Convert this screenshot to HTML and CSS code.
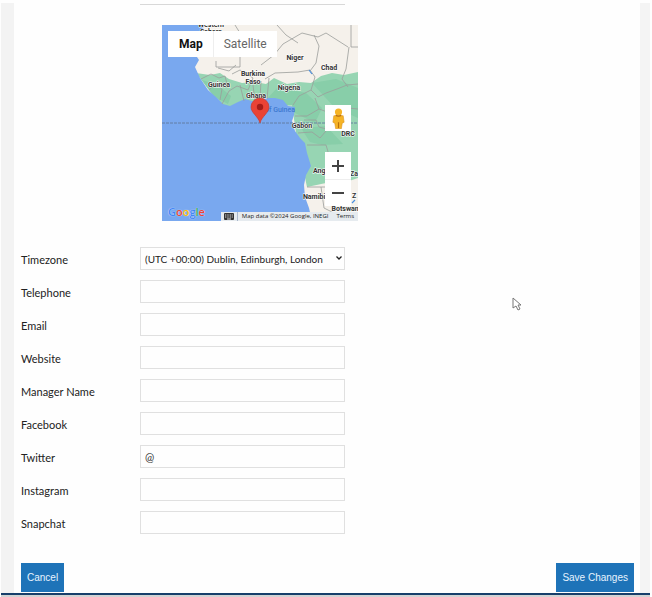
FILE: index.html
```html
<!DOCTYPE html>
<html lang="en">
<head>
<meta charset="utf-8">
<title>Location details</title>
<link rel="stylesheet" href="styles.css">
</head>
<body>
<form class="panel">
  <div class="previous-field"></div>
  <div class="map">
    <svg class="map-art" viewBox="0 0 196 196" aria-label="Map of West Africa">
      <rect width="196" height="196" fill="#f5f1eb"/>
      <path fill="#97d5b3" d="M34 48 48 50 58 48 67 54 80 58 93 57 104 59 112 53 125 59 137 57 149 58 159 51 170 48 182 50 196 47V153L181 158 164 158 145 162 135 115 130 80 60 82Z"/>
      <path fill="#79c79f" opacity=".5" d="M40 55 55 60 69 71 66 79 51 71ZM116 62 144 68 160 83 153 98 133 88 104 75ZM150 58 174 54 196 63V93L173 83ZM139 103 164 101 181 119 160 120 148 117Z"/>
      <path fill="#79a8ef" d="M0 0H42L38 16 33 29 37 35 33 42 38 53 46 65 55 73 61 79 68 81 76 77 83 74 93 77 101 73 113 73 121 75 126 81 133 82 132 90 130 96 133 106 138 113 143 118 145 128 149 141 144 150 142 160 143 172 147 183 150 196H0Z"/>
      <g fill="none" stroke="#9b9d9b" stroke-width=".8">
        <path d="M73 0 78 8M115 0 124 10 136 18M140 8 121 19 112 30 99 40M140 8 156 12 164 8 186 22M152 10 157 21 154 38 148 46M187 22 184 44 180 54 186 62M78 42H54V36M78 42V26M189 0V22M189 22H196"/>
        <path d="M103 54 113 48 136 47 148 45 153 52 149 65 137 71 131 80M70 49 78 45 91 53 86 65 75 61 67 66 60 79M78 60 82 76M91 60 93 77M99 56 98 74M107 53 105 74M39 54 49 49 57 53 63 51 66 63M47 65 53 59 60 64 58 75M56 43 67 46 74 40"/>
        <path d="M149 65 156 72 164 68 175 64 185 60 196 59M153 73 157 84 145 91 133 91M157 84 171 89 186 83 196 84M142 95 154 95 157 102 168 105 174 92M136 108 150 107 158 113 164 106M145 120H164L167 130 181 135M145 162H174L180 170M159 162 162 183 176 190"/>
      </g>
      <path d="M0 98H196" stroke="#60799c" stroke-width=".9" stroke-dasharray="3 1"/>
      <path d="m147 45 3 4M190 178l3-3" stroke="#4a8fe0" stroke-width="1.2"/>
      <g class="map-labels">
        <text x="49" y="2">Western</text><text x="49" y="9">Sahara</text>
        <text x="133" y="35">Niger</text><text x="167" y="45">Chad</text>
        <text x="91" y="51">Burkina</text><text x="91" y="59">Faso</text>
        <text x="57" y="62">Guinea</text><text x="127" y="65">Nigeria</text><text x="94" y="73">Ghana</text>
        <text class="water-label" x="118" y="87">of Guinea</text>
        <text x="140" y="103">Gabon</text><text x="186" y="111">DRC</text>
        <text x="162" y="148">Angola</text><text x="195" y="151">Zam</text>
        <text x="154" y="174">Namibia</text><text x="192" y="173">Z</text><text x="185" y="186">Botswana</text>
      </g>
      <path fill="#ea4335" stroke="#c5372c" stroke-width=".6" d="M98 98C96 91 89 88 89 82a9 9 0 0 1 18 0c0 6-7 9-9 16Z"/>
      <circle cx="98" cy="82" r="3.2" fill="#a71d18"/>
    </svg>
    <div class="map-types"><button type="button" class="map-type selected">Map</button><button type="button" class="map-type">Satellite</button></div>
    <button type="button" class="street-view" aria-label="Street View">
      <svg class="person" viewBox="0 0 16 22"><circle cx="8" cy="4" r="3.8" fill="#f6b426"/><path fill="#f6b426" stroke="#d8901c" stroke-width=".6" d="M3 8h10l1 7-2 1-1 6H5l-1-6-2-1Z"/><path d="M5 7.500q3 2 6 0M8 15v6" fill="none" stroke="#b9700c" stroke-width="1.2"/></svg>
    </button>
    <div class="zoom-controls">
      <button type="button" class="zoom-button" aria-label="Zoom in"><svg class="zoom-icon" viewBox="0 0 12 12"><path d="M0 6h12M6 0v12"/></svg></button>
      <button type="button" class="zoom-button" aria-label="Zoom out"><svg class="zoom-icon" viewBox="0 0 12 12"><path d="M0 6h12"/></svg></button>
    </div>
    <div class="brand" aria-label="Google"><span class="blue">G</span><span class="red">o</span><span class="yellow">o</span><span class="blue">g</span><span class="green">l</span><span class="red">e</span></div>
    <div class="attribution">
      <button type="button" class="keyboard" aria-label="Keyboard shortcuts"><svg class="keyboard-icon" viewBox="0 0 10 7"><rect width="10" height="7" rx="1" fill="#333"/><path d="M1 2h8M1 4h8" stroke="#ddd" stroke-dasharray="1 .7"/><path d="M3 6h4" stroke="#ddd"/></svg></button>
      <span class="map-data">Map data ©2024 Google, INEGI</span>
      <a class="terms" href="#terms">Terms</a>
    </div>
  </div>
  <div class="fields">
    <label class="label" for="timezone">Timezone</label>
    <div class="select-wrap"><select class="control timezone" id="timezone"><option>(UTC +00:00) Dublin, Edinburgh, London</option></select><svg class="chevron" viewBox="0 0 6 4"><path d="m.5.5 2.5 2.5L5.500.5"/></svg></div>
    <label class="label" for="telephone">Telephone</label><input class="control" id="telephone" type="tel">
    <label class="label" for="email">Email</label><input class="control" id="email" type="email">
    <label class="label" for="website">Website</label><input class="control" id="website" type="url">
    <label class="label" for="manager">Manager Name</label><input class="control" id="manager" type="text">
    <label class="label" for="facebook">Facebook</label><input class="control" id="facebook" type="text">
    <label class="label" for="twitter">Twitter</label><input class="control" id="twitter" type="text" value="@">
    <label class="label" for="instagram">Instagram</label><input class="control" id="instagram" type="text">
    <label class="label" for="snapchat">Snapchat</label><input class="control" id="snapchat" type="text">
  </div>
  <div class="actions"><button type="button" class="action">Cancel</button><button type="submit" class="action">Save Changes</button></div>
</form>
<footer class="footer"></footer>
<svg class="cursor" viewBox="0 0 10 14" aria-hidden="true"><path d="M1 1v10l3-2 2 4 2-1-2-4h3Z"/></svg>
</body>
</html>
```
FILE: styles.css
```css
* {
  box-sizing: border-box;
}

body {
  margin: 0;
  padding: 3px 2px 0 1px;
  background: #fefefe;
  color: #333;
  font-family: Lato, sans-serif;
  font-size: 11px;
}

button,
input,
select {
  margin: 0;
  font: inherit;
}

button {
  padding: 0;
  border: 0;
  cursor: pointer;
}

.panel {
  padding: 0 6px 0 7px;
  border-right: 10px solid #f4f4f4;
  border-left: 13px solid #f3f3f3;
}

.previous-field {
  width: 205px;
  height: 2px;
  margin-left: 119px;
  border-bottom: 1px solid #d8d8d8;
}

.map {
  position: relative;
  width: 196px;
  margin: 20px 0 26px 141px;
  overflow: hidden;
  font-family: Roboto, sans-serif;
}

.map-art {
  display: block;
  width: 100%;
}

.map-labels {
  fill: #333;
  stroke: #fff;
  stroke-width: 1px;
  paint-order: stroke;
  font-size: 7px;
  font-weight: 700;
  text-anchor: middle;
}

.water-label {
  fill: #3e78d0;
  stroke: none;
  font-weight: 500;
}

.map-types {
  position: absolute;
  top: 6px;
  left: 6px;
  display: flex;
  height: 26px;
  background: #fff;
}

.map-type {
  padding: 0 10px;
  background: #fff;
  color: #666;
  font-size: 12px;
}

.selected {
  padding-left: 11px;
  border-right: 1px solid #eee;
  color: #111;
  font-weight: 700;
}

.street-view {
  position: absolute;
  top: 80px;
  right: 7px;
  display: grid;
  place-items: center;
  width: 26px;
  height: 26px;
  background: #fff;
}

.person {
  width: 15px;
  height: 21px;
}

.zoom-controls {
  position: absolute;
  top: 127px;
  right: 7px;
  width: 26px;
  background: #fff;
}

.zoom-button {
  display: grid;
  place-items: center;
  width: 26px;
  height: 27px;
  background: #fff;
}

.zoom-button + .zoom-button {
  border-top: 1px solid #eee;
}

.zoom-icon {
  width: 12px;
  height: 12px;
  fill: none;
  stroke: #444;
  stroke-width: 2;
}

.brand {
  position: absolute;
  bottom: 2px;
  left: 6px;
  font-family: "Open Sans", sans-serif;
  font-size: 11px;
  font-weight: 600;
  line-height: 14px;
  text-shadow: 0 0 1px #fff;
}

.blue { color: #4285f4; }
.red { color: #ea4335; }
.yellow { color: #fbbc05; }
.green { color: #34a853; }

.attribution {
  position: absolute;
  right: 0;
  bottom: 0;
  display: flex;
  height: 9px;
  background: #e6ebef;
  color: #222;
  font-family: "Open Sans", sans-serif;
  font-size: 6px;
  line-height: 9px;
  white-space: nowrap;
}

.keyboard {
  display: grid;
  place-items: center;
  width: 17px;
  border-right: 1px solid #aab8cc;
  background: transparent;
}

.keyboard-icon {
  width: 10px;
  height: 7px;
}

.map-data {
  padding: 0 4px;
}

.terms {
  padding: 0 4px;
  color: #222;
  text-decoration: none;
}

.fields {
  display: grid;
  grid-template-columns: 119px 205px;
  grid-auto-rows: 23px;
  row-gap: 10px;
}

.label {
  padding-top: 1px;
  color: #222;
  line-height: 23px;
}

.control {
  width: 100%;
  height: 23px;
  padding: 0 4px;
  border: 1px solid #e0e0e0;
  border-radius: 0;
  background: #fefefe;
  color: #333;
}

.select-wrap {
  position: relative;
}

.timezone {
  appearance: none;
  color: #222;
  font-size: 10px;
}

.chevron {
  position: absolute;
  top: 9px;
  right: 3px;
  width: 6px;
  height: 4px;
  fill: none;
  stroke: #222;
  stroke-width: 1.3;
  pointer-events: none;
}

.actions {
  display: flex;
  justify-content: space-between;
  margin-top: 29px;
  padding-bottom: 1px;
}

.action {
  height: 29px;
  padding: 0 6px;
  background: #1e73b8;
  color: #e8f4ff;
  font-family: "Liberation Sans", sans-serif;
  font-size: 10px;
}

.footer {
  height: 4px;
  border-top: 2px solid #173f6b;
  background: #d2d3d4;
}

.cursor {
  position: absolute;
  top: 297px;
  left: 512px;
  width: 10px;
  height: 14px;
  fill: #fff;
  stroke: #777;
}
```
